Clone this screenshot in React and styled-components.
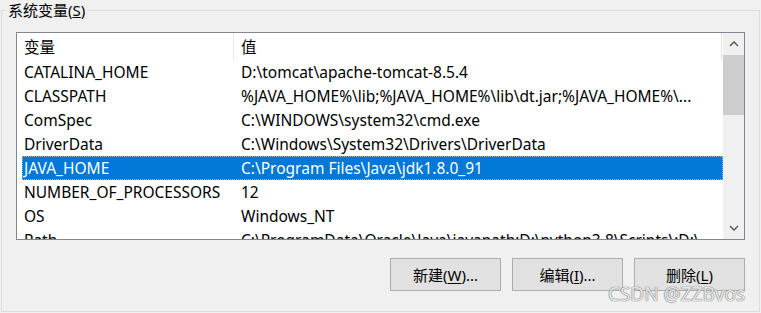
import styled, { createGlobalStyle } from "styled-components";

const rows = [
  { name: "CATALINA_HOME", value: "D:\\tomcat\\apache-tomcat-8.5.4" },
  {
    name: "CLASSPATH",
    value: "%JAVA_HOME%\\lib;%JAVA_HOME%\\lib\\dt.jar;%JAVA_HOME%\\...",
  },
  { name: "ComSpec", value: "C:\\WINDOWS\\system32\\cmd.exe" },
  { name: "DriverData", value: "C:\\Windows\\System32\\Drivers\\DriverData" },
  { name: "JAVA_HOME", value: "C:\\Program Files\\Java\\jdk1.8.0_91", selected: true },
  { name: "NUMBER_OF_PROCESSORS", value: "12" },
  { name: "OS", value: "Windows_NT" },
  {
    name: "Path",
    value: "C:\\ProgramData\\Oracle\\Java\\javapath;D:\\python3.8\\Scripts\\;D:\\...",
  },
];

const GlobalStyle = createGlobalStyle`
  body {
    margin: 0;
    background: #f0f0f0;
    font-family: "Noto Sans", "Noto Sans CJK SC", sans-serif;
    font-size: 15.5px;
    color: #000;
  }
`;

function Chevron({ down }) {
  return (
    <svg width="10" height="6" viewBox="0 0 10 6">
      <path
        d={down ? "M1 1 L5 5 L9 1" : "M1 5 L5 1 L9 5"}
        fill="none"
        stroke="#606060"
        strokeWidth="1.6"
      />
    </svg>
  );
}

function App() {
  return (
    <>
      <GlobalStyle />
      <Page>
        <GroupBox>
          <Legend>
            系统变量(<u>S</u>)
          </Legend>
          <Inner>
            <ListBox>
              <ListArea>
                <Header>
                  <HeadCell $first>变量</HeadCell>
                  <HeadCell>值</HeadCell>
                </Header>
                {rows.map((row) => (
                  <Row key={row.name} $selected={row.selected}>
                    <NameCell>{row.name}</NameCell>
                    <ValueCell>{row.value}</ValueCell>
                  </Row>
                ))}
              </ListArea>
              <ScrollBar>
                <ArrowButton>
                  <Chevron />
                </ArrowButton>
                <Track>
                  <Thumb />
                </Track>
                <ArrowButton>
                  <Chevron down />
                </ArrowButton>
              </ScrollBar>
            </ListBox>
            <ButtonRow>
              <Button>
                新建(<u>W</u>)...
              </Button>
              <Button>
                编辑(<u>I</u>)...
              </Button>
              <Button>
                删除(<u>L</u>)
              </Button>
            </ButtonRow>
          </Inner>
        </GroupBox>
        <Watermark>CSDN @ZZBvos</Watermark>
      </Page>
    </>
  );
}

const Page = styled.div`
  position: relative;
  padding: 0 1px;
  height: 313px;
  box-sizing: border-box;
`;

const GroupBox = styled.fieldset`
  margin: 0;
  padding: 12px 0 20px 0;
  border: 1px solid #dcdcdc;
  min-width: 0;
`;

const Legend = styled.legend`
  margin-left: 4px;
  padding: 0 2px;
  height: 20px;
  line-height: 20px;
  font-size: 15px;
`;

const Inner = styled.div`
  padding: 0 14px;
`;

const ListBox = styled.div`
  display: flex;
  height: 208px;
  box-sizing: border-box;
  border: 1px solid #828790;
  background: #fff;
`;

const ListArea = styled.div`
  flex: 1;
  min-width: 0;
  overflow: hidden;
  padding-left: 5px;
`;

const Header = styled.div`
  display: flex;
  height: 27px;
  align-items: center;
  margin-right: 1px;
  border-right: 1px solid #e5e5e5;
`;

const HeadCell = styled.div`
  box-sizing: border-box;
  height: 100%;
  display: flex;
  align-items: center;
  padding-left: ${(p) => (p.$first ? "2px" : "7px")};
  width: ${(p) => (p.$first ? "212px" : "auto")};
  flex: ${(p) => (p.$first ? "none" : "1")};
  border-right: ${(p) => (p.$first ? "1px solid #e5e5e5" : "none")};
`;

const Row = styled.div`
  display: flex;
  align-items: center;
  height: 24px;
  box-sizing: border-box;
  white-space: nowrap;
  background: ${(p) => (p.$selected ? "#0078d7" : "transparent")};
  color: ${(p) => (p.$selected ? "#fff" : "#000")};
  border: 1px dotted ${(p) => (p.$selected ? "#f3a35c" : "transparent")};
`;

const NameCell = styled.div`
  width: 212px;
  flex: none;
  box-sizing: border-box;
  padding-left: 1px;
  overflow: hidden;
`;

const ValueCell = styled.div`
  flex: 1;
  min-width: 0;
  padding-left: 6px;
  padding-right: 8px;
  overflow: hidden;
  text-overflow: ellipsis;
`;

const ScrollBar = styled.div`
  width: 21px;
  flex: none;
  display: flex;
  flex-direction: column;
  background: #f0f0f0;
`;

const ArrowButton = styled.div`
  height: 22px;
  display: flex;
  align-items: center;
  justify-content: center;
`;

const Track = styled.div`
  flex: 1;
`;

const Thumb = styled.div`
  height: 60px;
  background: #cdcdcd;
`;

const ButtonRow = styled.div`
  display: flex;
  justify-content: flex-end;
  gap: 11px;
  margin-top: 18px;
`;

const Button = styled.button`
  width: 111px;
  height: 33px;
  background: #e1e1e1;
  border: 1px solid #adadad;
  font-family: "Noto Sans", "Noto Sans CJK SC", sans-serif;
  font-size: 15px;
  color: #000;
  padding: 0;

  u {
    text-underline-offset: 2px;
  }
`;

const Watermark = styled.div`
  position: absolute;
  right: 16px;
  bottom: 6px;
  font-family: "Noto Sans", sans-serif;
  font-size: 19px;
  color: rgba(255, 255, 255, 0.85);
  text-shadow: 0 0 1px #666, 0 0 1px #666;
  pointer-events: none;
`;

export default App;
